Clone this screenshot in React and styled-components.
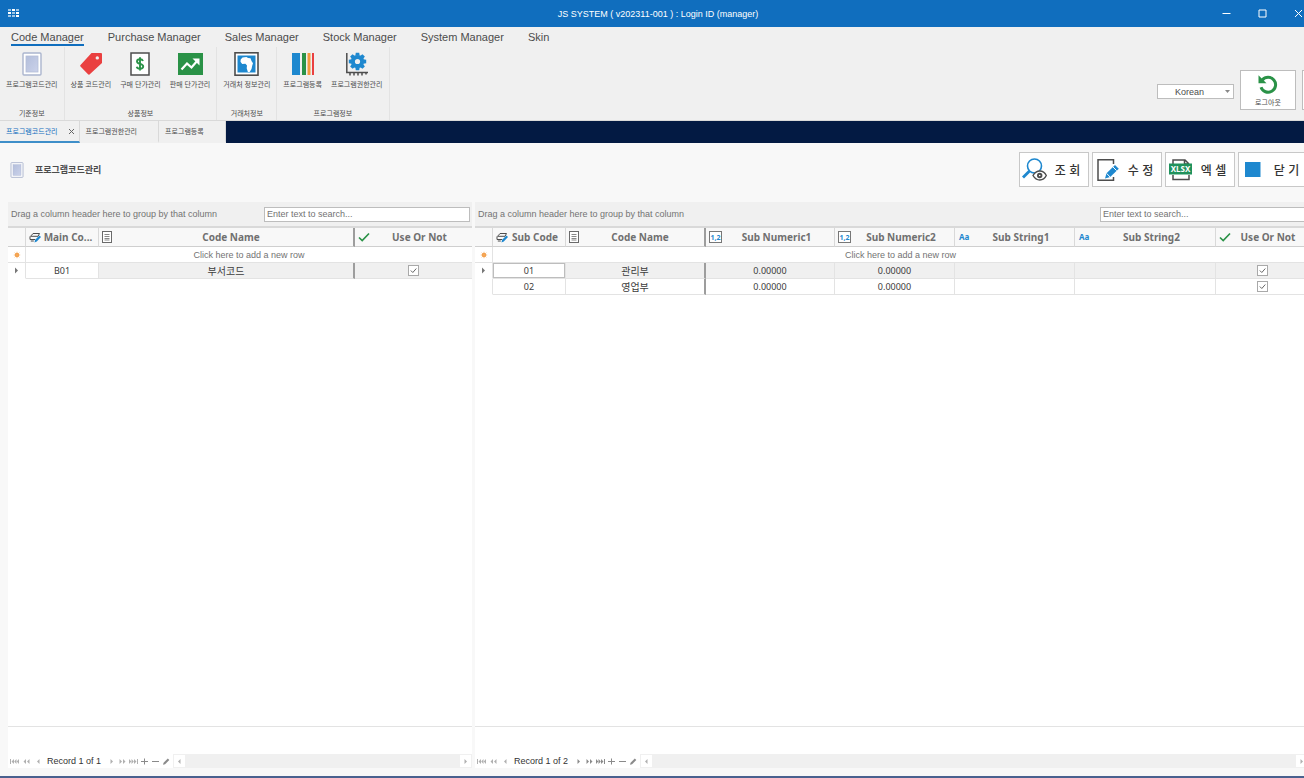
import React, { useState } from 'react';
import styled, { createGlobalStyle } from 'styled-components';

const COLORS = {
  title: '#106ebe',
  navy: '#031a43',
  ribbon: '#f0f0f0',
  page: '#f8f8f8',
  line: '#d9d9d9',
  lightLine: '#e3e3e3',
  heavyLine: '#9d9d9d',
  border: '#bdbdbd',
  text: '#4c4c4c',
  muted: '#737373',
  blue: '#1e88cf',
  green: '#2a9247',
  red: '#ea4040',
  orange: '#f39a3e',
  dark: '#4d4d4d',
};

const GlobalStyle = createGlobalStyle`
  * {
    box-sizing: border-box;
  }
  body {
    margin: 0;
    background: ${COLORS.page};
    color: ${COLORS.text};
    font-family: 'Liberation Sans', 'Noto Sans CJK KR', sans-serif;
    font-size: 9px;
  }
  button, input, select {
    margin: 0;
    padding: 0;
    font: inherit;
    color: inherit;
  }
  button {
    border: none;
    background: transparent;
  }
  svg {
    display: block;
    flex: none;
  }
`;

const Screen = styled.div`
  overflow: hidden;
`;

// the window is a little wider than the visible desktop
const Window = styled.div`
  width: calc(100% + 12px);
  min-height: 100vh;
  display: flex;
  flex-direction: column;
  border-bottom: 2px solid #4a618f;
`;

const TitleBar = styled.header`
  display: grid;
  grid-template-columns: 1fr auto 1fr;
  align-items: center;
  height: 27px;
  background: ${COLORS.title};
  color: #fff;
`;

const AppIcon = styled.div`
  padding-left: 8px;
`;

const WindowButtons = styled.div`
  display: flex;
  justify-content: flex-end;
`;

const WindowButton = styled.button`
  width: 36px;
  height: 27px;
  display: flex;
  align-items: center;
  justify-content: center;
`;

const Menu = styled.nav`
  display: flex;
  gap: 24px;
  height: 20px;
  padding-left: 11px;
  background: ${COLORS.ribbon};
`;

const MenuItem = styled.button`
  height: 19px;
  font-size: 11px;
  line-height: 17px;
  padding-top: 2px;
  border-bottom: 2px solid ${props => props.$active ? COLORS.title : 'transparent'};
`;

const Ribbon = styled.section`
  display: flex;
  height: 74px;
  background: ${COLORS.ribbon};
  border-bottom: 1px solid ${COLORS.line};
`;

const RibbonGroup = styled.div`
  display: flex;
  flex-direction: column;
  justify-content: space-between;
  padding: 5px 3px 1px;
  border-right: 1px solid ${COLORS.lightLine};
`;

const RibbonItems = styled.div`
  display: flex;
  gap: 3px;
`;

const RibbonButton = styled.button`
  display: flex;
  flex-direction: column;
  align-items: center;
  gap: 4px;
  padding: 0 3px;
  font-size: 7px;
  line-height: 10px;
  white-space: nowrap;
`;

const RibbonLabel = styled.div`
  font-size: 7px;
  line-height: 10px;
  text-align: center;
`;

const RibbonEnd = styled.div`
  display: flex;
  align-items: flex-start;
  gap: 6px;
  margin-left: auto;
  margin-right: -42px;
  padding-top: 23px;
`;

const LanguageBox = styled.label`
  display: grid;
  align-items: center;
  margin-top: 14px;
  > * {
    grid-area: 1 / 1;
  }
  > svg {
    justify-self: end;
    margin-right: 4px;
    pointer-events: none;
  }
`;

const Language = styled.select`
  width: 77px;
  height: 15px;
  padding: 0 12px 0 0;
  appearance: none;
  background: #fff;
  border: 1px solid ${COLORS.border};
  border-radius: 0;
  text-align-last: center;
`;

const SideButton = styled.button`
  display: flex;
  flex-direction: column;
  align-items: center;
  gap: 4px;
  width: 56px;
  height: 40px;
  padding-top: 3px;
  background: #fff;
  border: 1px solid ${COLORS.border};
  font-size: 7px;
  line-height: 10px;
`;

const TabBar = styled.div`
  display: flex;
  height: 22px;
  background: ${COLORS.navy};
`;

const Tab = styled.div`
  display: flex;
  padding-left: 6px;
  background: ${COLORS.ribbon};
  border-right: 1px solid ${COLORS.line};
  border-bottom: 2px solid ${props => props.$active ? '#3f8fc9' : COLORS.ribbon};
  color: ${props => props.$active ? COLORS.title : COLORS.text};
  font-size: 7px;
`;

const TabClose = styled.div`
  display: flex;
  width: 21px;
  justify-content: flex-end;
  padding-right: 4px;
  color: ${COLORS.text};
`;

const Toolbar = styled.div`
  display: flex;
  align-items: center;
  height: 59px;
  padding: 0 8px 6px 10px;
`;

const PageTitle = styled.h1`
  margin: 0 auto 0 11px;
  font-size: 9px;
  font-weight: 700;
  line-height: 12px;
`;

const Actions = styled.div`
  display: flex;
  gap: 3px;
`;

const ActionButton = styled.button`
  display: flex;
  align-items: center;
  width: 70px;
  height: 35px;
  padding-left: 2px;
  background: #fff;
  border: 1px solid #c8c8c8;
  color: #333;
  font-size: 12px;
  font-weight: 500;
  > span {
    flex: 1;
    text-align: center;
  }
`;

const Workspace = styled.main`
  flex: 1;
  display: grid;
  grid-template-columns: minmax(0, 464fr) minmax(0, 833fr);
  gap: 3px;
  padding: 0 8px 8px;
`;

const Panel = styled.section`
  display: flex;
  flex-direction: column;
  background: #fff;
`;

const GroupBar = styled.div`
  display: flex;
  align-items: center;
  justify-content: space-between;
  height: 26px;
  padding: 0 2px 0 3px;
  background: ${COLORS.ribbon};
  border-bottom: 2px solid ${COLORS.line};
  color: ${COLORS.muted};
`;

const Search = styled.input`
  width: 206px;
  height: 15px;
  padding: 0 2px;
  background: #fff;
  border: 1px solid ${COLORS.border};
  &::placeholder {
    color: ${COLORS.muted};
    opacity: 1;
  }
`;

const Table = styled.table`
  width: 100%;
  table-layout: fixed;
  border-collapse: separate;
  border-spacing: 0;
`;

const Col = styled.col`
  width: ${props => props.$width ? `${props.$width}px` : 'auto'};
`;

const Head = styled.th`
  height: 19px;
  padding: 0 3px;
  background: ${COLORS.page};
  border-bottom: 1px solid #cfcfcf;
  border-right: ${props => props.$heavy ? `2px solid ${COLORS.heavyLine}` : `1px solid ${COLORS.line}`};
  color: #707070;
  font-family: 'Noto Sans', sans-serif;
  font-size: 10px;
  font-weight: 700;
  line-height: 14px;
  &:last-child {
    border-right: none;
  }
`;

const HeadContent = styled.div`
  display: flex;
  align-items: center;
  > span {
    flex: 1;
    white-space: nowrap;
  }
`;

const Cell = styled.td`
  height: 16px;
  padding: 0;
  background: ${props => props.$selected ? COLORS.ribbon : '#fff'};
  border-bottom: 1px solid ${COLORS.lightLine};
  border-right: ${props => props.$heavy ? `2px solid ${COLORS.heavyLine}` : `1px solid ${COLORS.lightLine}`};
  box-shadow: ${props => props.$focused ? `inset 0 0 0 1px ${COLORS.border}` : 'none'};
  color: #3c3c3c;
  font-family: 'Noto Sans', 'Noto Sans CJK KR', sans-serif;
  font-size: ${props => props.$heavy ? 10 : 9}px;
  line-height: 14px;
  text-align: center;
  &:last-child {
    border-right: none;
  }
`;

const Indicator = styled(Cell)`
  background: #fff;
  border-bottom-color: ${props => props.$blank ? 'transparent' : COLORS.lightLine};
  > svg {
    margin: 0 auto;
  }
`;

const NewRow = styled(Cell)`
  color: ${COLORS.muted};
  font-family: 'Liberation Sans', sans-serif;
`;

const Check = styled.input`
  display: block;
  width: 11px;
  height: 11px;
  margin: 0 auto;
  appearance: none;
  border: 1px solid #a9a9a9;
  background: #fff;
  &:checked {
    background: #fff url("data:image/svg+xml,%3Csvg xmlns='http://www.w3.org/2000/svg' viewBox='0 0 9 9'%3E%3Cpath d='M1.8 4.5l2 2 3.5-4' fill='none' stroke='%23666'/%3E%3C/svg%3E");
  }
`;

const Summary = styled.div`
  height: 28px;
  margin-top: auto;
  border-top: 1px solid ${COLORS.lightLine};
`;

const Navigator = styled.div`
  display: flex;
  align-items: center;
  height: 14px;
  color: #333;
`;

const RecordText = styled.span`
  padding: 0 5px 0 3px;
  white-space: nowrap;
`;

const NavButton = styled.button`
  display: flex;
  align-items: center;
  justify-content: center;
  width: ${props => props.$wide ? 12 : 11}px;
  height: 12px;
  color: ${props => props.$strong ? '#8a8a8a' : '#b0b0b0'};
`;

const Scroll = styled.div`
  flex: 1;
  display: flex;
  align-items: center;
  justify-content: space-between;
  height: 14px;
  margin-left: 1px;
  padding: 0 1px;
  background: ${COLORS.ribbon};
`;

const ScrollButton = styled(NavButton)`
  background: #fff;
`;

const GridLogo = () => (
  <svg width="11" height="9" viewBox="0 0 11 9" fill="#fff">
    {[0, 1, 2].map(r => [0, 1, 2].map(c => (
      <rect key={`${r}${c}`} x={c * 4} y={r * 3} width="3" height="2" opacity={['010', '101', '001'][r][c] === '1' ? 1 : 0.6} />
    )))}
  </svg>
);

const DocIcon = ({ width = 20, height = 24 }) => (
  <svg width={width} height={height} viewBox="0 0 20 24">
    <defs>
      <linearGradient id="docFill" x1="0" y1="0" x2="1" y2="1">
        <stop offset="0" stopColor="#b3bedb" />
        <stop offset="1" stopColor="#cbd2ea" />
      </linearGradient>
    </defs>
    <rect x="1" y="1" width="18" height="22" rx="1" fill="#fff" stroke="#abb5ce" strokeWidth="1.4" />
    <rect x="4" y="4" width="12" height="16" fill="url(#docFill)" stroke="#b4bdd7" strokeWidth="0.8" />
  </svg>
);

const TagIcon = () => (
  <svg width="24" height="24" viewBox="0 0 24 24">
    <path fill={COLORS.red} fillRule="evenodd" d="M12.500 1h9.500q1 0 1 1v9L10.500 22.500q-.8.5-1.500-.2L1.500 14.600q-.8-.8 0-1.500zM18.300 4.200a1.700 1.700 0 1 0 0 3.400 1.700 1.700 0 0 0 0-3.400z" />
  </svg>
);

const DollarIcon = () => (
  <svg width="20" height="24" viewBox="0 0 20 24" fill="none">
    <rect x="1" y="1" width="18" height="22" fill="#fff" stroke={COLORS.dark} strokeWidth="1.500" />
    <path d="M13 9C12.500 7.700 11.400 7.200 10 7.200 8 7.200 7 8.200 7 9.400c0 3.100 6.200 1.700 6.200 4.900 0 1.500-1.200 2.500-3.200 2.500-1.700 0-2.900-.7-3.300-2.100M10 5.300v13.200" stroke={COLORS.green} strokeWidth="1.900" />
  </svg>
);

const ChartIcon = () => (
  <svg width="25" height="24" viewBox="0 0 25 24" fill="none">
    <path fill={COLORS.green} d="M0 1h25v22H0z" />
    <path d="M3.500 17.500l5.500-6 4.500 4 6-7" stroke="#fff" strokeWidth="2.200" />
    <path d="M14.500 6.500H21.500v7z" fill="#fff" />
  </svg>
);

const AfricaIcon = () => (
  <svg width="25" height="24" viewBox="0 0 25 24">
    <rect x="1" y="0.800" width="23" height="22.400" fill="#fff" stroke={COLORS.dark} strokeWidth="1.600" />
    <path fill={COLORS.blue} d="M3.500 3.500h18v17h-18z" />
    <path fill="#fff" d="M8.500 5.500l4-.5 1.500 1 2.500.3 1 2.700 1.500 2.300-.8 2.500-.7 3.200-1.800 3h-1.800l-1.200-3.800.3-2.700-1.600-1.700-3.200.2-1.700-2.300.2-2.200z" />
  </svg>
);

const BooksIcon = () => (
  <svg width="22" height="24" viewBox="0 0 22 24">
    <path fill={COLORS.blue} d="M0 1h8v22H0z" />
    <path fill={COLORS.green} d="M10 1h4v22h-4z" />
    <path fill={COLORS.orange} d="M15.500 1h3v22h-3z" />
    <path fill={COLORS.red} d="M20 1h2v22h-2z" />
  </svg>
);

const GearChartIcon = () => (
  <svg width="23" height="24" viewBox="0 0 23 24" fill="none">
    <path d="M1.800 1v19.500H23M5 21v2.500M9 21v2.500M13 21v2.500M17 21v2.500M21 21v1.500" stroke={COLORS.dark} strokeWidth="1.500" />
    <circle cx="12.500" cy="9.500" r="4.600" stroke={COLORS.blue} strokeWidth="4" />
    {[0, 45, 90, 135, 180, 225, 270, 315].map(a => (
      <path key={a} fill={COLORS.blue} d="M10.800 0.800h3.400l.5 3h-4.400z" transform={`rotate(${a} 12.500 9.500)`} />
    ))}
  </svg>
);

const LogoutIcon = () => (
  <svg width="20" height="20" viewBox="0 0 20 20" fill="none">
    <path d="M4.300 6A7.500 7.500 0 1 1 3 13.200" stroke={COLORS.green} strokeWidth="3" />
    <path d="M.5 1.200v8h8z" fill={COLORS.green} />
  </svg>
);

const FindIcon = () => (
  <svg width="25" height="24" viewBox="0 0 25 24" fill="none">
    <circle cx="12.500" cy="8" r="7" stroke={COLORS.blue} strokeWidth="1.600" />
    <path d="M7.500 13L1 19.500" stroke={COLORS.blue} strokeWidth="2.800" />
    <path d="M11 17.500c3.500-6 10.300-6 13.300 0-3 6-9.800 6-13.300 0z" fill="#fff" stroke={COLORS.dark} strokeWidth="1.400" />
    <circle cx="17.700" cy="17.500" r="2.700" fill={COLORS.dark} />
    <circle cx="17.700" cy="17.500" r="0.800" fill="#fff" />
  </svg>
);

const EditIcon = () => (
  <svg width="25" height="24" viewBox="0 0 25 24" fill="none">
    <path d="M18.500 6V1.800H3v20.500h15.500V19" stroke={COLORS.dark} strokeWidth="1.500" />
    <path d="M10 20.500l1.500-5.200 8.500-8.300 3.800 3.700-8.600 8.400z" fill={COLORS.blue} />
    <path d="M17.800 8.800l3.800 3.800M11.500 15.300l3.700 3.800" stroke="#fff" />
  </svg>
);

const XlsxIcon = () => (
  <svg width="25" height="24" viewBox="0 0 25 24" fill="none">
    <path d="M5 6V2h12l4 4M5 17v4.500h16V17M16.500 2v4H21" stroke={COLORS.dark} strokeWidth="1.500" />
    <path fill="#20925c" d="M1 5.500h23v11H1z" />
    <text x="12.500" y="14" textAnchor="middle" fill="#fff" fontSize="8" fontWeight="700" fontFamily="Noto Sans, sans-serif">XLSX</text>
  </svg>
);

const CloseIcon = () => (
  <svg width="25" height="24" viewBox="0 0 25 24">
    <path fill={COLORS.blue} d="M4 4h15.500v15H4z" />
  </svg>
);

const CodeIcon = () => (
  <svg width="12" height="11" viewBox="0 0 12 11" fill="none">
    <path d="M2.500 3.300L4 1.500h6.500L9 4.300H1.500zM1 4.500v3h5M1.800 9h3" stroke={COLORS.dark} />
    <path d="M5.500 10.500l.6-2.800 4.400-4.200 1.500 1.600-4.200 4.300z" fill={COLORS.blue} />
  </svg>
);

const ListIcon = () => (
  <svg width="10" height="12" viewBox="0 0 10 12" fill="none" stroke="#6a6a6a">
    <rect x="0.500" y="0.500" width="9" height="11" fill="#fff" />
    <path d="M2.500 3.500h5M2.500 5.500h5M2.500 7.500h5M2.500 9h5" strokeWidth="0.800" />
  </svg>
);

const TickIcon = () => (
  <svg width="12" height="10" viewBox="0 0 12 10" fill="none">
    <path d="M1 5.500L4.200 8.500 11 1.500" stroke={COLORS.green} strokeWidth="1.700" />
  </svg>
);

const NumberIcon = () => (
  <svg width="13" height="12" viewBox="0 0 13 12">
    <rect x="0.500" y="0.500" width="12" height="11" fill="#fff" stroke="#777" />
    <text x="6.500" y="8.800" textAnchor="middle" fill={COLORS.blue} fontSize="7" fontWeight="700" fontFamily="Noto Sans, sans-serif">1,2</text>
  </svg>
);

const TextIcon = () => (
  <svg width="13" height="12" viewBox="0 0 13 12">
    <text x="1" y="8.500" fill={COLORS.blue} fontSize="8" fontWeight="700" fontFamily="Noto Sans, sans-serif">Aa</text>
  </svg>
);

const StarIcon = () => (
  <svg width="8" height="8" viewBox="0 0 8 8">
    <circle cx="4" cy="4" r="2" fill="#f08a24" />
    <path d="M4 .8v6.400M.8 4h6.400M1.700 1.700l4.600 4.600M6.300 1.700L1.700 6.300" stroke="#f5a95c" strokeWidth="0.800" />
  </svg>
);

const Arrow = ({ d }) => (
  <svg width="9" height="7" viewBox="0 0 9 7" fill="currentColor"><path d={d} /></svg>
);

const ARROWS = {
  first: 'M0 1h1v5H0zM4 1v5L1.500 3.500zM6.500 1v5L4.200 3.500zM9 1v5L6.700 3.500z',
  prevPage: 'M4 1v5L1.500 3.500zM7.500 1v5L5 3.500z',
  prev: 'M5.500 1v5L3 3.500z',
  next: 'M3.500 1v5L6 3.500z',
  nextPage: 'M1.500 1v5L4 3.500zM5 1v5l2.500-2.500z',
  last: 'M0 1v5l2.300-2.500zM2.500 1v5l2.300-2.500zM5 1v5l2.500-2.500zM8 1h1v5H8z',
  add: 'M4 .5h1V3h3v1H5v2.500H4V4H1V3h3z',
  remove: 'M1 3h7v1H1z',
  edit: 'M1 6.800l.6-2L5.800.6l1.500 1.500L3.100 6.200z',
};

const menus = ['Code Manager', 'Purchase Manager', 'Sales Manager', 'Stock Manager', 'System Manager', 'Skin'];

const ribbon = [
  { label: '기준정보', items: [['프로그램코드관리', DocIcon]] },
  { label: '상품정보', items: [['상품 코드관리', TagIcon], ['구매 단가관리', DollarIcon], ['판매 단가관리', ChartIcon]] },
  { label: '거래처정보', items: [['거래처 정보관리', AfricaIcon]] },
  { label: '프로그램정보', items: [['프로그램등록', BooksIcon], ['프로그램권한관리', GearChartIcon]] },
];

const tabs = ['프로그램코드관리', '프로그램권한관리', '프로그램등록'];

const actions = [['조 회', FindIcon], ['수 정', EditIcon], ['엑 셀', XlsxIcon], ['닫 기', CloseIcon]];

const mainColumns = [
  { title: 'Main Co...', icon: CodeIcon, width: 73 },
  { title: 'Code Name', icon: ListIcon, heavy: true },
  { title: 'Use Or Not', icon: TickIcon, width: 117 },
];

const subColumns = [
  { title: 'Sub Code', icon: CodeIcon, width: 73 },
  { title: 'Code Name', icon: ListIcon, heavy: true },
  { title: 'Sub Numeric1', icon: NumberIcon, width: 129 },
  { title: 'Sub Numeric2', icon: NumberIcon, width: 120 },
  { title: 'Sub String1', icon: TextIcon, width: 120 },
  { title: 'Sub String2', icon: TextIcon, width: 141 },
  { title: 'Use Or Not', icon: TickIcon, width: 92 },
];

const mainRows = [['B01', '부서코드', true]];
const subRows = [
  ['01', '관리부', '0.00000', '0.00000', '', '', true],
  ['02', '영업부', '0.00000', '0.00000', '', '', true],
];

const DataPanel = ({ columns, rows, focused, more }) => (
  <Panel>
    <GroupBar>
      <span>Drag a column header here to group by that column</span>
      <Search type="text" placeholder="Enter text to search..." aria-label="Search" />
    </GroupBar>
    <Table>
      <colgroup>
        <Col $width={18} />
        {columns.map((c, i) => <Col key={i} $width={c.width} />)}
      </colgroup>
      <thead>
        <tr>
          <Head />
          {columns.map(c => (
            <Head key={c.title} $heavy={c.heavy}>
              <HeadContent><c.icon /><span>{c.title}</span></HeadContent>
            </Head>
          ))}
        </tr>
      </thead>
      <tbody>
        <tr>
          <Indicator><StarIcon /></Indicator>
          <NewRow colSpan={columns.length}>Click here to add a new row</NewRow>
        </tr>
        {rows.map((row, r) => (
          <tr key={r}>
            <Indicator $blank>
              {r === 0 && <svg width="5" height="7" viewBox="0 0 5 7"><path d="M1 .5v6l3-3z" fill="#777" /></svg>}
            </Indicator>
            {row.map((value, i) => (
              <Cell key={i} $heavy={columns[i].heavy} $selected={r === 0 && i > 0} $focused={focused && r === 0 && i === 0}>
                {value === true ? <Check type="checkbox" defaultChecked aria-label={columns[i].title} /> : value}
              </Cell>
            ))}
          </tr>
        ))}
      </tbody>
    </Table>
    <Summary />
    <Navigator>
      {['first', 'prevPage', 'prev'].map(n => (
        <NavButton key={n} $wide aria-label={n}><Arrow d={ARROWS[n]} /></NavButton>
      ))}
      <RecordText>Record 1 of {rows.length}</RecordText>
      {['next', 'nextPage', 'last', 'add', 'remove', 'edit'].map((n, i) => (
        <NavButton key={n} $strong={i > 2 || more} aria-label={n}><Arrow d={ARROWS[n]} /></NavButton>
      ))}
      <Scroll>
        <ScrollButton aria-label="scroll left"><Arrow d={ARROWS.prev} /></ScrollButton>
        <ScrollButton aria-label="scroll right"><Arrow d={ARROWS.next} /></ScrollButton>
      </Scroll>
    </Navigator>
  </Panel>
);

export default function App() {
  const [menu, setMenu] = useState(0);
  const [tab, setTab] = useState(0);

  return (
    <Screen>
      <GlobalStyle />
      <Window>
        <TitleBar>
          <AppIcon><GridLogo /></AppIcon>
          <span>JS SYSTEM ( v202311-001 ) : Login ID (manager)</span>
          <WindowButtons>
            <WindowButton aria-label="Minimize">
              <svg width="9" height="9" viewBox="0 0 9 9"><path d="M.5 4.500h8" stroke="#fff" /></svg>
            </WindowButton>
            <WindowButton aria-label="Maximize">
              <svg width="9" height="9" viewBox="0 0 9 9"><path d="M1 1h7v7H1z" fill="none" stroke="#fff" /></svg>
            </WindowButton>
            <WindowButton aria-label="Close">
              <svg width="9" height="9" viewBox="0 0 9 9"><path d="M1 1l7 7M8 1L1 8" stroke="#fff" /></svg>
            </WindowButton>
          </WindowButtons>
        </TitleBar>
        <Menu>
          {menus.map((m, i) => (
            <MenuItem key={m} $active={i === menu} onClick={() => setMenu(i)}>{m}</MenuItem>
          ))}
        </Menu>
        <Ribbon>
          {ribbon.map(group => (
            <RibbonGroup key={group.label}>
              <RibbonItems>
                {group.items.map(([name, Icon]) => (
                  <RibbonButton key={name}><Icon />{name}</RibbonButton>
                ))}
              </RibbonItems>
              <RibbonLabel>{group.label}</RibbonLabel>
            </RibbonGroup>
          ))}
          <RibbonEnd>
            <LanguageBox>
              <Language aria-label="Language" defaultValue="Korean">
                <option>Korean</option>
                <option>English</option>
              </Language>
              <svg width="5" height="3" viewBox="0 0 5 3"><path d="M0 0h5L2.500 3z" fill="#888" /></svg>
            </LanguageBox>
            <SideButton><LogoutIcon />로그아웃</SideButton>
            <SideButton aria-label="Exit" />
          </RibbonEnd>
        </Ribbon>
        <TabBar>
          {tabs.map((t, i) => (
            <Tab key={t} $active={i === tab}>
              <button onClick={() => setTab(i)}>{t}</button>
              <TabClose>
                {i === tab && (
                  <button aria-label="Close tab">
                    <svg width="7" height="7" viewBox="0 0 7 7"><path d="M1 1l5 5M6 1L1 6" stroke="#666" /></svg>
                  </button>
                )}
              </TabClose>
            </Tab>
          ))}
        </TabBar>
        <Toolbar>
          <DocIcon width={14} height={16} />
          <PageTitle>프로그램코드관리</PageTitle>
          <Actions>
            {actions.map(([name, Icon]) => (
              <ActionButton key={name}><Icon /><span>{name}</span></ActionButton>
            ))}
          </Actions>
        </Toolbar>
        <Workspace>
          <DataPanel columns={mainColumns} rows={mainRows} />
          <DataPanel columns={subColumns} rows={subRows} focused more />
        </Workspace>
      </Window>
    </Screen>
  );
}
